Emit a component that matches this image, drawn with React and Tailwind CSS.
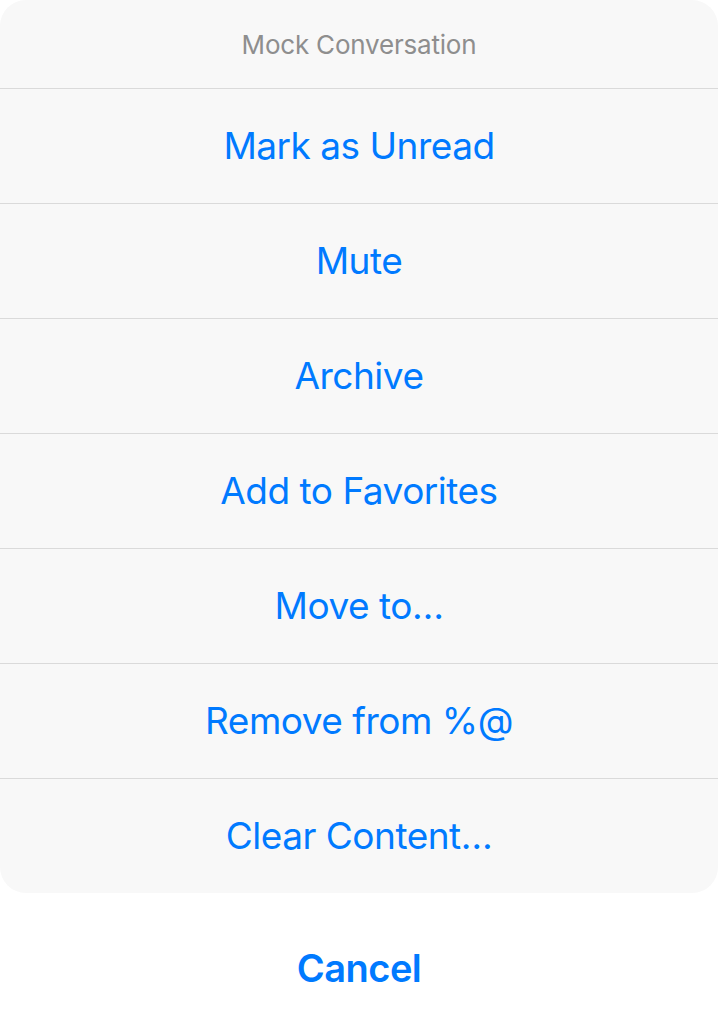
import React from 'react';

const actions = [
  'Mark as Unread',
  'Mute',
  'Archive',
  'Add to Favorites',
  'Move to…',
  'Remove from %@',
  'Clear Content…',
];

const font = { fontFamily: 'Inter, "Noto Sans", sans-serif' };

export default function App() {
  return (
    <div className="min-h-screen w-[718px] bg-white overflow-hidden" style={font}>
      <div className="bg-[#f8f8f8] rounded-[26px] overflow-hidden">
        <div className="h-[88px] flex items-center justify-center text-[26px] text-[#8e8e8e] tracking-[-0.2px]">
          Mock Conversation
        </div>
        {actions.map((label) => (
          <button
            key={label}
            className="w-full h-[115px] border-t border-[#dadada] flex items-center justify-center text-[37px] text-[#007aff] tracking-[-0.5px]"
          >
            {label}
          </button>
        ))}
      </div>
      <div className="mt-[13px] bg-white rounded-[26px] h-[124px] flex items-center justify-center">
        <span className="text-[38px] font-semibold text-[#007aff] tracking-[-0.5px]">Cancel</span>
      </div>
    </div>
  );
}
